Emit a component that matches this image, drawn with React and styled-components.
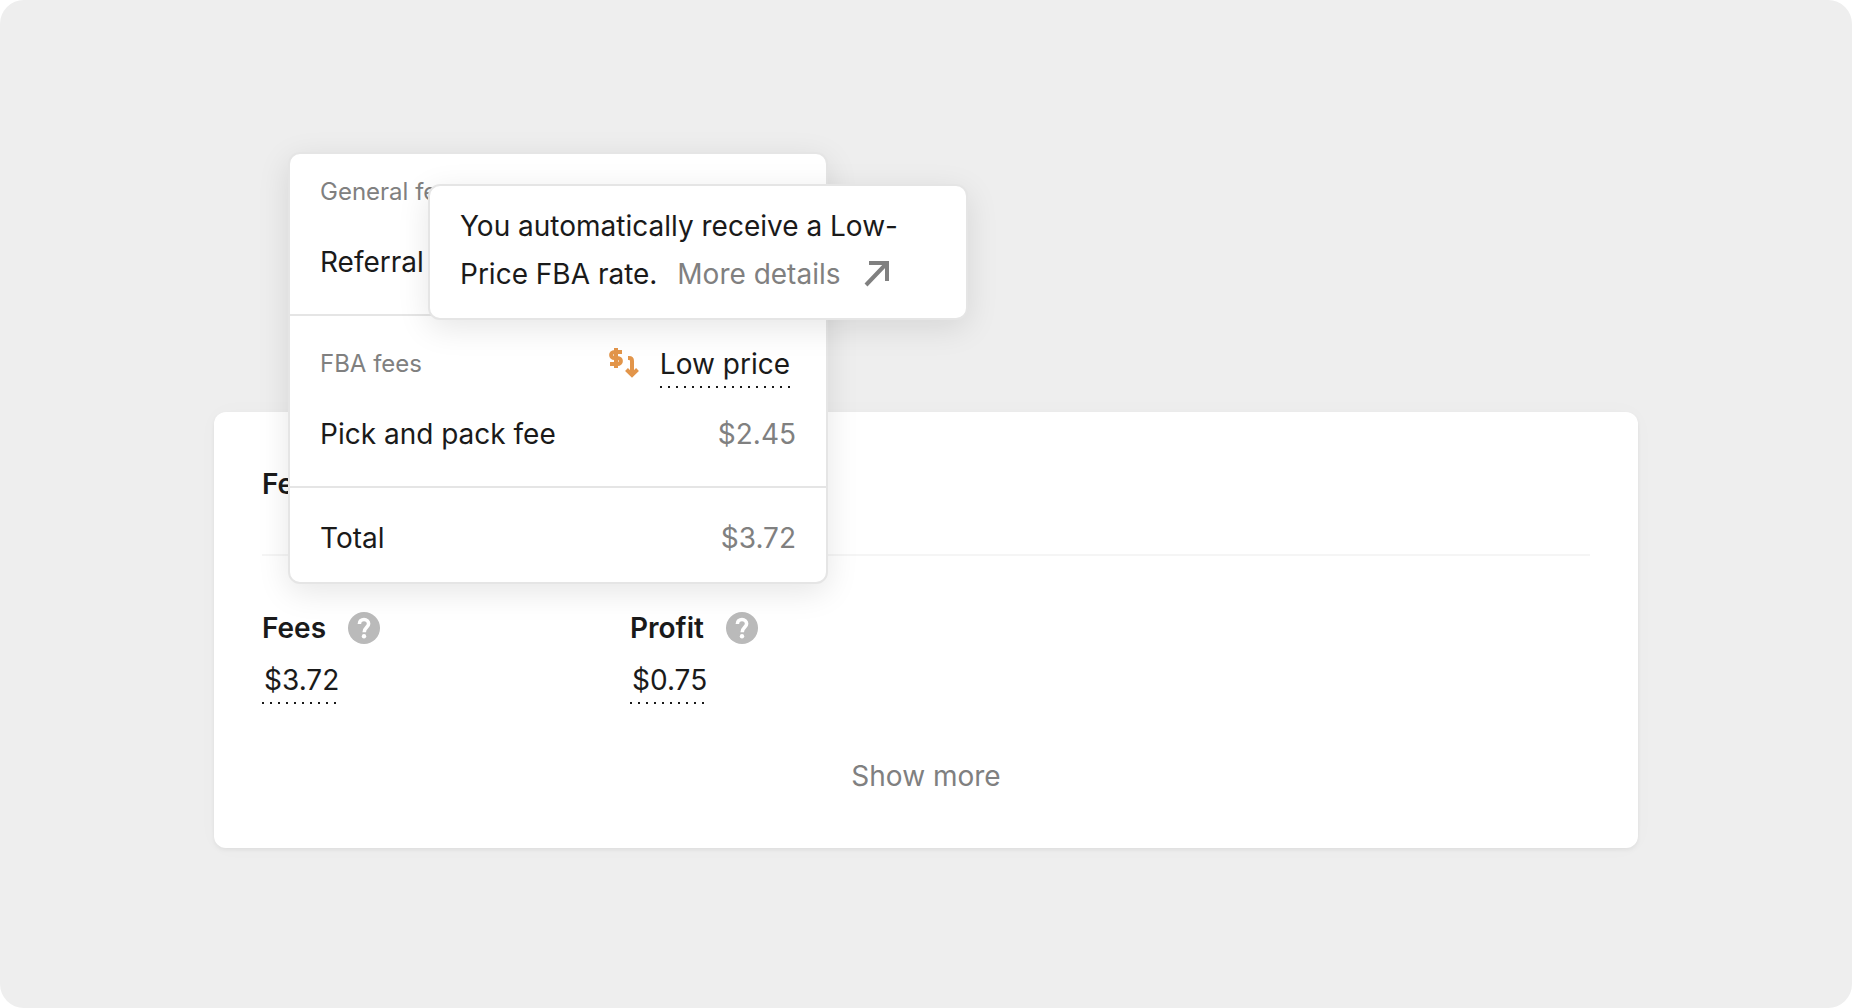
import React from 'react'
import styled, { createGlobalStyle } from 'styled-components'

const GlobalStyle = createGlobalStyle`
  *, *::before, *::after {
    box-sizing: border-box;
  }
  body {
    margin: 0;
    background: #ffffff;
    color: #1a1a1a;
    font-family: Inter, "Liberation Sans", sans-serif;
    font-size: 28px;
    line-height: 48px;
  }
  button {
    padding: 0;
    border: 0;
    background: none;
    color: inherit;
    font: inherit;
    cursor: pointer;
  }
`

const Page = styled.main`
  min-height: 100vh;
  padding: 412px 214px 160px;
  border-radius: 24px;
  background: #eeeeee;
`

const Card = styled.section`
  position: relative;
  padding: 48px;
  border-radius: 12px;
  background: #ffffff;
  box-shadow: 0 2px 4px rgba(0, 0, 0, 0.06), 0 0 24px rgba(0, 0, 0, 0.02);
`

const CardTitle = styled.h2`
  margin: 0;
  padding-bottom: 46px;
  border-bottom: 2px solid #f5f5f5;
  font-size: 28px;
  font-weight: 600;
`

const Metrics = styled.div`
  display: grid;
  grid-template-columns: repeat(4, 1fr);
  column-gap: 144px;
  padding: 48px 0;
`

const Metric = styled.div`
  display: flex;
  flex-direction: column;
  align-items: flex-start;
  gap: 4px;
`

const MetricHead = styled.div`
  display: flex;
  align-items: center;
  gap: 22px;
`

const MetricName = styled.h3`
  margin: 0;
  font-size: 28px;
  font-weight: 600;
`

const HelpButton = styled.button`
  display: flex;
  color: #bababa;
`

// 2px dots on an 8px pitch, wider apart than a dotted border
const Hint = styled.button`
  padding: 0 ${({ $inset }) => $inset ? 2 : 0}px;
  background: linear-gradient(to right, #1a1a1a 2px, transparent 2px) left bottom / 8px 2px repeat-x;
`

const ShowMore = styled.button`
  display: block;
  margin: 0 auto;
  color: #808080;
`

const Popover = styled.div`
  position: absolute;
  top: -260px;
  left: 74px;
  width: 540px;
  border: 2px solid #e5e5e5;
  border-radius: 12px;
  background: #ffffff;
  box-shadow: 0 8px 32px rgba(0, 0, 0, 0.1);
`

const Group = styled.div`
  display: flex;
  flex-direction: column;
  gap: 22px;
  padding: ${({ $top }) => $top}px 30px ${({ $bottom }) => $bottom || 28}px;
  & + & {
    border-top: 2px solid #e5e5e5;
  }
`

const Row = styled.div`
  display: flex;
  align-items: center;
  justify-content: space-between;
`

const GroupName = styled.span`
  color: #808080;
  font-size: 24px;
`

const Amount = styled.span`
  color: #808080;
`

const Badge = styled.div`
  display: flex;
  align-items: center;
  gap: 20px;
  padding-right: 6px;
`

const Tooltip = styled.div`
  position: absolute;
  top: 30px;
  left: 138px;
  width: 540px;
  padding: 16px 60px 20px 30px;
  border: 2px solid #e5e5e5;
  border-radius: 12px;
  background: #ffffff;
  box-shadow: 0 8px 32px rgba(0, 0, 0, 0.1);
`

const MoreLink = styled.a`
  display: inline-flex;
  align-items: center;
  gap: 24px;
  margin-left: 12px;
  color: #808080;
  text-decoration: none;
  vertical-align: top;
`

const HelpIcon = () => (
  <svg width="32" height="32" viewBox="0 0 32 32" aria-hidden="true">
    <circle cx="16" cy="16" r="16" fill="currentColor" />
    <path d="M11.4 11.9C11.4 9.2 13.4 7.5 16 7.5S20.6 9.3 20.6 11.8C20.6 15.2 16.2 15.6 16.2 20.2" fill="none" stroke="#ffffff" strokeWidth="3.6" />
    <circle cx="16" cy="24.2" r="2.2" fill="#ffffff" />
  </svg>
)

const ArrowIcon = () => (
  <svg width="26" height="26" viewBox="0 0 26 26" fill="none" stroke="currentColor" strokeWidth="4" aria-hidden="true">
    <path d="M5 2H23V20M23 2L2 24" />
  </svg>
)

const LowPriceIcon = () => (
  <svg width="32" height="32" viewBox="0 0 32 32" fill="none" stroke="#e2954a" strokeWidth="4" aria-hidden="true">
    <path d="M14 4H6.5C2 4 2 10 6.5 10H9.5C14 10 14 16 9.5 16H2M8 0V20" />
    <path d="M20 10H21C23 10 24 11 24 13V27M18.5 21.5L24 27L29.5 21.5" />
  </svg>
)

const metrics = [
  { name: 'Fees', value: '$3.72' },
  { name: 'Profit', value: '$0.75' }
]

const App = () => (
  <>
    <GlobalStyle />
    <Page>
      <Card>
        <CardTitle>Fees</CardTitle>
        <Metrics>
          {metrics.map(({ name, value }) => (
            <Metric key={name}>
              <MetricHead>
                <MetricName>{name}</MetricName>
                <HelpButton type="button" aria-label={`About ${name}`}><HelpIcon /></HelpButton>
              </MetricHead>
              <Hint type="button" $inset>{value}</Hint>
            </Metric>
          ))}
        </Metrics>
        <ShowMore type="button">Show more</ShowMore>
        <Popover>
          <Group $top={14}>
            <Row><GroupName>General fees</GroupName></Row>
            <Row><span>Referral fee</span></Row>
          </Group>
          <Group $top={24}>
            <Row>
              <GroupName>FBA fees</GroupName>
              <Badge>
                <LowPriceIcon />
                <Hint type="button">Low price</Hint>
              </Badge>
            </Row>
            <Row><span>Pick and pack fee</span><Amount>$2.45</Amount></Row>
          </Group>
          <Group $top={26} $bottom={20}>
            <Row><span>Total</span><Amount>$3.72</Amount></Row>
          </Group>
          <Tooltip role="tooltip">
            You automatically receive a Low-Price FBA rate.{' '}
            <MoreLink href="#">More details <ArrowIcon /></MoreLink>
          </Tooltip>
        </Popover>
      </Card>
    </Page>
  </>
)

export default App
